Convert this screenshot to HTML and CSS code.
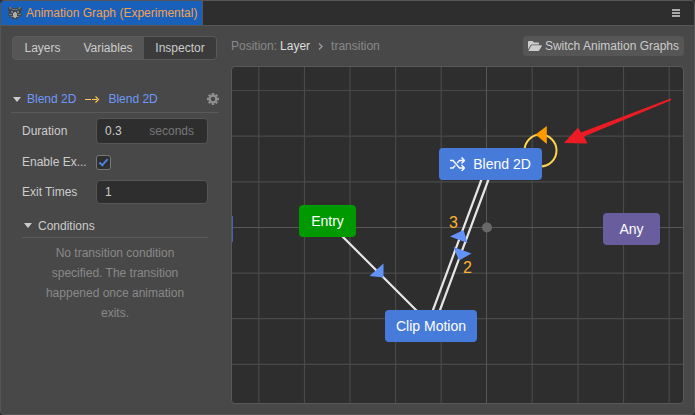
FILE: index.html
```html
<!DOCTYPE html>
<html lang="en">
<head>
<meta charset="utf-8">
<title>Animation Graph</title>
<link rel="stylesheet" href="styles.css">
</head>
<body>
<div class="window">
  <header class="titlebar">
    <div class="title">
      <svg class="title-icon" width="14" height="14" viewBox="0 0 14 14" aria-hidden="true">
        <path d="M0 1h3l2 1h4l2-1h3v3l-1 2 1 3-2 2-2 1v1H4v-1l-2-1-2-2 1-3-1-2z" fill="#3f4850"/>
        <path d="M1 1h2l1 2H2zM13 1h-2l-1 2h2zM4 3h6v1H4z" fill="#6e777f"/>
        <path d="M3 5h2v2H3zM9 5h2v2H9zM1 8h3v1H1zM10 8h3v1h-3zM3 10h2v1H3zM9 10h2v1H9z" fill="#747c82"/>
        <path d="M6 6h2v1h1v4H8v1H6v-1H5V7h1z" fill="#b0ada4"/>
      </svg>
      <span>Animation Graph (Experimental)</span>
    </div>
    <button class="menu" type="button" aria-label="Menu">
      <svg width="8" height="8" viewBox="0 0 8 8"><path d="M0 0h8v2H0zM0 3h8v2H0zM0 6h8v2H0z" fill="#aaa"/></svg>
    </button>
  </header>
  <main class="content">
    <aside class="sidebar">
      <nav class="tabs">
        <button class="tab" type="button">Layers</button>
        <button class="tab" type="button">Variables</button>
        <button class="tab tab-active" type="button">Inspector</button>
      </nav>
      <section class="inspector">
        <div class="section-head">
          <svg class="caret" width="8" height="5" viewBox="0 0 8 5"><path d="M0 0h8L4 5z" fill="#ccc"/></svg>
          <span class="state">Blend 2D</span>
          <svg class="arrow" width="15" height="7" viewBox="0 0 15 7" fill="none" stroke="#ffc94d"><path d="M0 3.500h6M7 3.500h5M10.500 .5l3 3-3 3" stroke-width="1.200"/></svg>
          <span class="state">Blend 2D</span>
          <button class="gear" type="button" aria-label="Settings">
            <svg width="12" height="12" viewBox="0 0 12 12"><circle cx="6" cy="6" r="3.300" fill="none" stroke="#909090" stroke-width="2.200"/><path d="M6 0v2M6 10v2M0 6h2M10 6h2M1.800 1.800l1.400 1.400M8.800 8.800l1.400 1.400M1.800 10.200l1.400-1.400M8.800 3.200l1.400-1.400" stroke="#909090" stroke-width="2.400"/></svg>
          </button>
        </div>
        <div class="fields">
          <div class="field">
            <label for="duration">Duration</label>
            <div class="box box-tall"><input id="duration" type="text" value="0.3"><span class="unit">seconds</span></div>
          </div>
          <div class="field">
            <label for="enable">Enable Ex...</label>
            <input class="check" id="enable" type="checkbox" checked>
          </div>
          <div class="field">
            <label for="times">Exit Times</label>
            <div class="box"><input id="times" type="text" value="1"></div>
          </div>
          <div class="conditions-head">
            <svg class="caret" width="8" height="5" viewBox="0 0 8 5"><path d="M0 0h8L4 5z" fill="#ccc"/></svg>
            <span>Conditions</span>
          </div>
          <p class="empty">No transition condition specified. The transition happened once animation exits.</p>
        </div>
      </section>
    </aside>
    <section class="graph">
      <div class="toolbar">
        <div class="crumbs">
          <span>Position:</span>
          <a class="crumb" href="#">Layer</a>
          <svg width="5" height="8" viewBox="0 0 5 8" fill="none" stroke="#999" stroke-width="1.400"><path d="M1 1.500l3 3-3 3"/></svg>
          <span>transition</span>
        </div>
        <button class="switch" type="button">
          <svg width="14" height="10" viewBox="0 0 14 10" fill="#ccc"><path d="M0 8.500V1Q0 0 1 0H4.500L6 1.500h4q1 0 1 1V3.500H4Q3 3.500 2.500 4.200z"/><path d="M4 4.300h9.500q.7 0 .3.600L11.500 9q-.5 1-1.500 1H.9q-.6 0-.3-.6L3 5q.4-.7 1-.7z"/></svg>
          <span>Switch Animation Graphs</span>
        </button>
      </div>
      <div class="canvas">
        <svg class="layer" width="451" height="337" viewBox="232 67 451 337" aria-hidden="true">
          <g stroke="#494949" stroke-width="1.200">
            <path d="M258.800 67V404M304.500 67V404M350 67V404M395.600 67V404M441.200 67V404M532.200 67V404M578 67V404M623.500 67V404M669.200 67V404"/>
            <path d="M232 90.500H683M232 136.200H683M232 181.800H683M232 273.200H683M232 318.600H683M232 364.400H683"/>
          </g>
          <path d="M486.500 67V404M232 227.500H683" stroke="#585858"/>
          <path d="M232 216v26" stroke="#4166ad" stroke-width="2"/>
          <circle cx="487" cy="227.500" r="5" fill="#686868"/>
          <g stroke="#e6e6e6" stroke-width="2.200" fill="none">
            <path d="M327 221L431 325M486.500 166L426.500 327.500M493.500 166L433.500 327.500"/>
          </g>
          <g fill="#6292f5">
            <path d="M369.500 276L383.500 263.500V277.500z"/>
            <path d="M450 236.500L463.500 230L467.500 243z"/>
            <path d="M453.500 247L471.500 253.500L459 260.500z"/>
          </g>
          <circle cx="540.500" cy="150.500" r="16" fill="none" stroke="#ffd250" stroke-width="2"/>
          <path d="M535.500 134.500L546.800 126V144z" fill="#f90"/>
          <path d="M670.500 98.500Q672 99.500 670.500 100.500L584 136.500L587.500 143.500L564 143L578 127.500L581 132.500z" fill="#ed1c24"/>
        </svg>
        <span class="order order-3">3</span>
        <span class="order order-2">2</span>
        <button class="node blend" type="button">
          <svg width="15" height="14" viewBox="0 0 15 14" fill="none" stroke="#f4f7ff" stroke-width="1.500"><path d="M0 3.500h3l6.500 7.500H14M0 11h3l2.200-2.500M7.200 6L9.500 3.500H14M11.500 .5l3 3-3 3M11.500 8l3 3-3 3"/></svg>
          <span>Blend 2D</span>
        </button>
        <button class="node entry" type="button">Entry</button>
        <button class="node clip" type="button">Clip Motion</button>
        <button class="node any" type="button">Any</button>
      </div>
    </section>
  </main>
</div>
</body>
</html>
```
FILE: styles.css
```css
*, *::before, *::after { box-sizing: border-box; }

body {
  margin: 0;
  background: #2e2e2e;
  color: #ccc;
  font: 12px/16px "Liberation Sans", Arial, sans-serif;
}

button, input {
  margin: 0;
  padding: 0;
  border: 0;
  background: none;
  color: inherit;
  font: inherit;
}

svg { display: block; flex: none; }

.window {
  display: flex;
  flex-direction: column;
  min-height: 100vh;
  border: 1px solid #565656;
  border-radius: 4px;
  background: #484848;
  overflow: hidden;
}

.titlebar {
  display: flex;
  justify-content: space-between;
  height: 25px;
  border-bottom: 1px solid #565656;
  background: #2e2e2e;
}

.title {
  display: flex;
  align-items: center;
  gap: 4px;
  padding: 0 5px 0 7px;
  border-right: 1px solid #565656;
  background: #1860ba;
  color: #f5a04c;
  white-space: nowrap;
}

.menu { padding: 0 14px; }

.content {
  flex: 1;
  display: flex;
  gap: 12px;
  padding: 10px 10px;
}

.sidebar {
  flex: none;
  width: 208px;
}

.tabs {
  display: flex;
  height: 24px;
  margin: 0 2px 0 1px;
  border: 1px solid #5a5a5a;
  border-radius: 4px;
  background: #565656;
  overflow: hidden;
}

.tab { flex: 59 1 0; }
.tab:nth-child(2) { flex-grow: 72; }
.tab:nth-child(3) { flex-grow: 72; }
.tab-active { background: #3b3b3b; }

.inspector { margin-top: 26px; }

.section-head {
  display: flex;
  align-items: center;
  height: 27px;
  padding: 0 0 0 2px;
  border-bottom: 1px solid #5a5a5a;
  color: #6f98fa;
}

.caret { margin-right: 6px; }
.arrow { margin: 0 8px 0 9px; }
.gear { margin-left: auto; }

.fields { padding: 5px 11px 0; }

.field {
  display: flex;
  align-items: center;
  margin-bottom: 10px;
}

.field label {
  flex: none;
  width: 70px;
  margin-right: 4px;
  white-space: nowrap;
}

.box {
  flex: 1;
  display: flex;
  align-items: center;
  min-width: 0;
  height: 24px;
  padding: 0 13px 0 8px;
  border: 1px solid #565656;
  border-radius: 4px;
  background: #2e2e2e;
}

.box-tall { height: 26px; }
.box input { flex: 1; min-width: 0; outline: 0; }
.unit { color: #777; }

.check {
  appearance: none;
  position: relative;
  width: 15px;
  height: 15px;
  border: 1px solid #777;
  border-radius: 3px;
  background: #2e2e2e;
}

.check::after {
  content: "";
  position: absolute;
  left: 4px;
  top: 1px;
  width: 5px;
  height: 9px;
  border: solid #4a80e0;
  border-width: 0 2px 2px 0;
  transform: rotate(42deg);
}

.conditions-head {
  display: flex;
  align-items: center;
  height: 24px;
  padding-left: 2px;
  border-bottom: 1px solid #5a5a5a;
}

.empty {
  margin: 5px 20px 0;
  color: #898989;
  line-height: 20px;
  text-align: center;
}

.graph {
  flex: 1;
  display: flex;
  flex-direction: column;
  min-width: 0;
}

.toolbar {
  display: flex;
  align-items: center;
  justify-content: space-between;
  height: 20px;
  margin-bottom: 10px;
}

.crumbs {
  display: flex;
  align-items: center;
  gap: 3px;
  color: #898989;
  white-space: nowrap;
}

.crumbs svg { margin: 0 5px; }
.crumb { color: #ddd; text-decoration: none; }

.switch {
  display: flex;
  align-items: center;
  gap: 3px;
  height: 20px;
  padding: 0 5px;
  border-radius: 4px;
  background: #565656;
  white-space: nowrap;
}

.canvas {
  position: relative;
  flex: 1;
  min-height: 338px;
  border: 1px solid #585858;
  border-radius: 4px;
  background: #2e2e2e;
  overflow: hidden;
}

.layer {
  position: absolute;
  left: 0;
  top: 0;
}

.node {
  position: absolute;
  display: flex;
  align-items: center;
  justify-content: center;
  gap: 8px;
  height: 32px;
  border-radius: 4px;
  color: #fff;
  font-size: 14px;
}

.blend { left: 207px; top: 81px; width: 103px; background: #477bd9; }
.entry { left: 67px; top: 138px; width: 57px; background: #009900; }
.clip { left: 153px; top: 243px; width: 92px; background: #477bd9; }
.any { left: 371px; top: 146px; width: 57px; background: #6a5d9e; }

.order {
  position: absolute;
  color: #ffb02e;
  font-size: 16px;
}

.order-3 { left: 217px; top: 148px; }
.order-2 { left: 231px; top: 193px; }
```
